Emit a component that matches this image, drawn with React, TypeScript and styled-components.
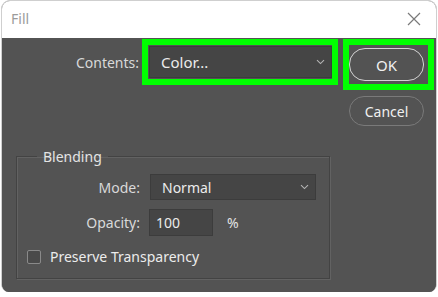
import { styled, createGlobalStyle } from 'styled-components';

const GlobalStyle = createGlobalStyle`
  html, body {
    margin: 0;
    padding: 0;
    background: #ffffff;
  }
  body {
    font-family: 'Noto Sans', 'Open Sans', sans-serif;
  }
`;

const Chevron = () => (
  <svg width="9" height="6" viewBox="0 0 9 6" fill="none">
    <path d="M1 1.2 L4.5 4.6 L8 1.2" stroke="#b4b4b4" strokeWidth="1.1" />
  </svg>
);

const CloseIcon = () => (
  <svg width="14" height="14" viewBox="0 0 14 14" fill="none">
    <path d="M1 1 L13 13 M13 1 L1 13" stroke="#7a7a7a" strokeWidth="1.2" />
  </svg>
);

export default function App() {
  return (
    <>
      <GlobalStyle />
      <Window>
        <TitleBar>
          <Title>Fill</Title>
          <CloseButton>
            <CloseIcon />
          </CloseButton>
        </TitleBar>

        <Body>
          <TopRow>
            <ContentsRow>
              <FieldLabel $width={140}>Contents:</FieldLabel>
              <Highlight $pad="1px 0 1px 1px">
                <Select $width={183} $height={32} $size={15}>
                  <span>Color...</span>
                  <Chevron />
                </Select>
              </Highlight>
            </ContentsRow>

            <ButtonColumn>
              <Highlight $pad="3px 4px 3px 0">
                <PillButton $primary>OK</PillButton>
              </Highlight>
              <CancelWrap>
                <PillButton>Cancel</PillButton>
              </CancelWrap>
            </ButtonColumn>
          </TopRow>

          <Group>
            <Legend>Blending</Legend>
            <GroupGrid>
              <FieldLabel $width={120}>Mode:</FieldLabel>
              <Select $width={166} $height={26} $size={14}>
                <span>Normal</span>
                <Chevron />
              </Select>

              <FieldLabel $width={120}>Opacity:</FieldLabel>
              <OpacityRow>
                <NumberInput>100</NumberInput>
                <Unit>%</Unit>
              </OpacityRow>
            </GroupGrid>

            <CheckRow>
              <CheckBox />
              <CheckText>Preserve Transparency</CheckText>
            </CheckRow>
          </Group>
        </Body>
      </Window>
    </>
  );
}

const Window = styled.div`
  width: 436px;
  height: 292px;
  margin-left: 1px;
  border: 1px solid #cfcfcf;
  border-bottom: none;
  border-radius: 9px 9px 8px 8px;
  overflow: hidden;
  display: flex;
  flex-direction: column;
  box-sizing: border-box;
  background: #535353;
`;

const TitleBar = styled.div`
  height: 37px;
  flex-shrink: 0;
  background: #ffffff;
  display: flex;
  align-items: center;
  justify-content: space-between;
  padding: 0 15px 0 9px;
`;

const Title = styled.span`
  font-size: 14px;
  color: #9b9b9b;
  margin-top: -2px;
`;

const CloseButton = styled.div`
  display: flex;
  align-items: center;
  margin-top: -1px;
`;

const Body = styled.div`
  flex: 1;
  background: #535353;
  padding-top: 1px;
`;

const TopRow = styled.div`
  display: flex;
  align-items: flex-start;
`;

const ContentsRow = styled.div`
  display: flex;
  align-items: center;
`;

const FieldLabel = styled.label<{ $width: number }>`
  width: ${(p) => p.$width}px;
  box-sizing: border-box;
  text-align: right;
  padding-right: 3px;
  font-size: 14px;
  color: #d9d9d9;
`;

const Highlight = styled.div<{ $pad: string }>`
  border: 6px solid #00ff00;
  padding: ${(p) => p.$pad};
  display: flex;
`;

const Select = styled.div<{ $width: number; $height: number; $size: number }>`
  width: ${(p) => p.$width}px;
  height: ${(p) => p.$height}px;
  box-sizing: border-box;
  background: #454545;
  border: 1px solid #3c3c3c;
  display: flex;
  align-items: center;
  justify-content: space-between;
  padding: 0 6px 0 11px;
  font-size: ${(p) => p.$size}px;
  color: #ececec;
`;

const ButtonColumn = styled.div`
  margin-left: 5px;
  display: flex;
  flex-direction: column;
`;

const CancelWrap = styled.div`
  margin-top: 6px;
  padding-left: 6px;
`;

const PillButton = styled.button<{ $primary?: boolean }>`
  width: 75px;
  height: ${(p) => (p.$primary ? 33 : 30)}px;
  border-radius: 16px;
  border: ${(p) => (p.$primary ? '1.5px solid #d4d4d4' : '1px solid #7a7a7a')};
  background: #535353;
  color: #f0f0f0;
  font-family: 'Noto Sans', 'Open Sans', sans-serif;
  font-size: ${(p) => (p.$primary ? 15 : 14)}px;
  padding: 0;
`;

const Group = styled.fieldset`
  width: 314px;
  box-sizing: border-box;
  margin: 21px 0 0 14px;
  padding: 0 0 12px 0;
  border: 1px solid #434343;
  box-shadow: 1px 1px 0 #626262, inset 1px 1px 0 #626262;
`;

const Legend = styled.legend`
  margin-left: 20px;
  padding: 0 6px;
  font-size: 14px;
  color: #e4e4e4;
`;

const GroupGrid = styled.div`
  display: grid;
  grid-template-columns: 120px auto;
  column-gap: 7px;
  row-gap: 9px;
  align-items: center;
  padding-left: 6px;
  margin-top: 8px;
`;

const OpacityRow = styled.div`
  display: flex;
  align-items: center;
`;

const NumberInput = styled.div`
  width: 64px;
  height: 27px;
  box-sizing: border-box;
  margin-left: -1px;
  background: #454545;
  border: 1px solid #3c3c3c;
  display: flex;
  align-items: center;
  padding-left: 6px;
  font-size: 14px;
  color: #ececec;
`;

const Unit = styled.span`
  margin-left: 14px;
  font-size: 14px;
  color: #e4e4e4;
`;

const CheckRow = styled.div`
  display: flex;
  align-items: center;
  margin: 11px 0 0 10px;
`;

const CheckBox = styled.span`
  width: 14px;
  height: 14px;
  box-sizing: border-box;
  border: 1px solid #8a8a8a;
  border-radius: 2px;
  background: #4a4a4a;
`;

const CheckText = styled.span`
  margin-left: 9px;
  font-size: 14px;
  color: #ececec;
`;
